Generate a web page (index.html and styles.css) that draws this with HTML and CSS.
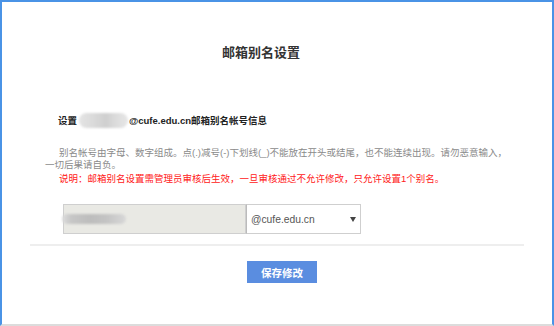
FILE: index.html
```html
<!DOCTYPE html>
<html lang="zh-CN">
<head>
    <meta charset="UTF-8">
    <meta name="viewport" content="width=device-width, initial-scale=1.0">
    <title>邮箱别名设置</title>
    <link rel="stylesheet" href="styles.css">
</head>
<body>
    <div class="frame">
        <h1 class="title">邮箱别名设置</h1>

        <div class="info">
            设置<span class="mask"></span>@cufe.edu.cn邮箱别名帐号信息
        </div>

        <p class="tips">别名帐号由字母、数字组成。点(.)减号(-)下划线(_)不能放在开头或结尾，也不能连续出现。请勿恶意输入，一切后果请自负。</p>
        <p class="notice">说明：邮箱别名设置需管理员审核后生效，一旦审核通过不允许修改，只允许设置1个别名。</p>

        <div class="form-row">
            <div class="alias-input"><span class="mask mask-input"></span></div>
            <div class="domain-select">
                <span>@cufe.edu.cn</span>
                <i class="arrow"></i>
            </div>
        </div>

        <div class="divider"></div>

        <div class="actions">
            <button class="btn-save">保存修改</button>
        </div>
    </div>
</body>
</html>
```

FILE: styles.css
```css
body {
    margin: 0;
    padding: 0;
    font-family: "Liberation Sans", "Noto Sans CJK SC", sans-serif;
    background: #fff;
}
.frame {
    width: 554px;
    height: 326px;
    box-sizing: border-box;
    border: 2px solid #4a93e6;
    border-bottom: 2px solid #dcdcdc;
    overflow: hidden;
}
.title {
    margin: 43px 0 0;
    padding-right: 32px;
    text-align: center;
    font-size: 13px;
    line-height: 16px;
    font-weight: bold;
    color: #333;
}
.info {
    margin: 54px 0 0 56px;
    font-size: 9.5px;
    line-height: 12px;
    font-weight: bold;
    color: #222;
}
.mask {
    display: inline-block;
    vertical-align: middle;
    width: 49px;
    height: 15px;
    margin: -2px 1px 0 2px;
    border-radius: 8px;
    background: linear-gradient(90deg, #e4e4e4 0%, #dadada 30%, #cfcfcf 55%, #dcdcdc 75%, #e6e6e6 100%);
    filter: blur(1px);
}
.tips {
    margin: 19px 0 0 43px;
    width: 470px;
    text-indent: 14px;
    font-size: 9.5px;
    line-height: 11.5px;
    color: #8a8a8a;
}
.notice {
    margin: 3px 0 0 57px;
    font-size: 9.5px;
    line-height: 12px;
    color: #ff2020;
}
.form-row {
    display: flex;
    margin: 19px 0 0 61px;
    height: 30px;
}
.alias-input {
    width: 183px;
    box-sizing: border-box;
    border: 1px solid #cfcfcf;
    background: #e9e9e4;
    display: flex;
    align-items: center;
}
.mask-input {
    width: 64px;
    height: 10px;
    margin: 0 0 0 -2px;
    border-radius: 5px;
    background: linear-gradient(90deg, #dcdcdc 0%, #c6c6c6 15%, #bdbdbd 45%, #c4c4c4 70%, #d8d8d8 100%);
}
.domain-select {
    width: 115px;
    box-sizing: border-box;
    border: 1px solid #cfcfcf;
    border-left: 1px solid #bbb;
    background: #fff;
    display: flex;
    align-items: center;
    justify-content: space-between;
    padding: 0 4px 0 4px;
    font-size: 10.3px;
    color: #555;
}
.arrow {
    width: 0;
    height: 0;
    border-left: 3px solid transparent;
    border-right: 3px solid transparent;
    border-top: 5px solid #444;
}
.divider {
    margin: 10px 0 0 28px;
    width: 494px;
    height: 2px;
    background: #eeeeee;
}
.actions {
    margin-top: 15px;
    padding-left: 245px;
}
.btn-save {
    width: 70px;
    height: 22px;
    border: none;
    padding: 0;
    background: #5a8de0;
    color: #fff;
    font-family: "Noto Sans CJK SC", sans-serif;
    font-size: 10.5px;
    font-weight: bold;
}
```
